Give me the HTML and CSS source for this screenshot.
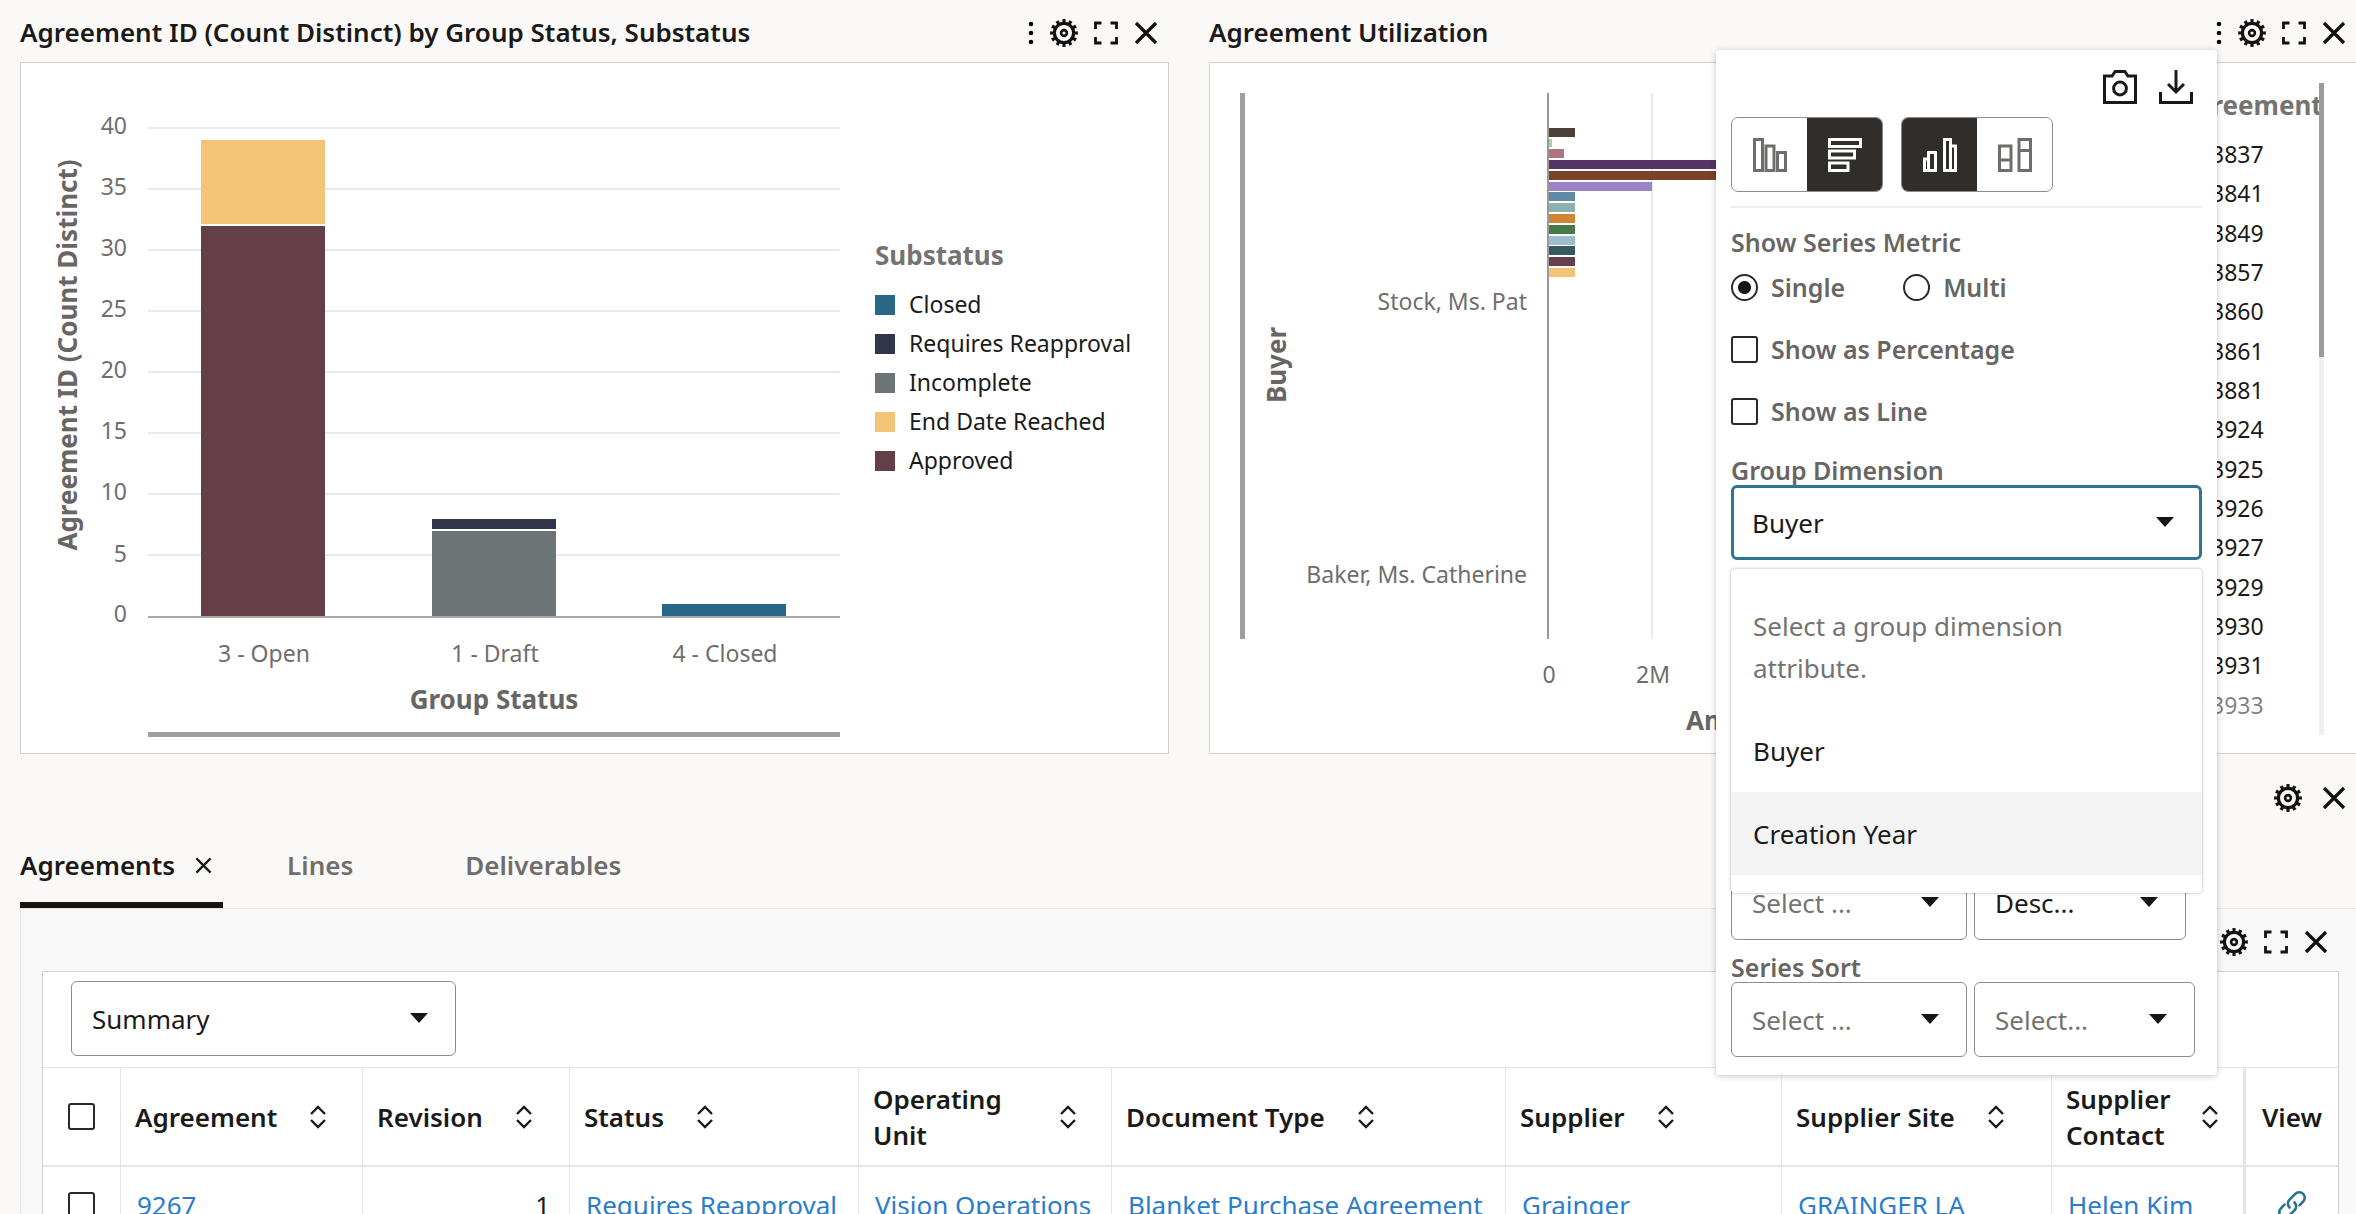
FILE: index.html
```html
<!DOCTYPE html>
<html lang="en">
<head>
<meta charset="utf-8">
<title>Agreements</title>
<link rel="stylesheet" href="styles.css">
</head>
<body>
<svg class="defs" aria-hidden="true">
  <symbol id="dots" viewBox="0 0 6 24"><circle cx="3" cy="3" r="2.300"/><circle cx="3" cy="12" r="2.300"/><circle cx="3" cy="21" r="2.300"/></symbol>
  <symbol id="gear" viewBox="0 0 28 28"><g fill="none" stroke="currentColor"><circle cx="14" cy="14" r="9.600" stroke-width="3.200"/><circle cx="14" cy="14" r="12.200" stroke-width="3.400" pathLength="24" stroke-dasharray="1 1" stroke-dashoffset="0.500"/><circle cx="14" cy="14" r="2.900" stroke-width="2.600"/></g></symbol>
  <symbol id="expand" viewBox="0 0 24 24"><path d="M1.500 8V2h6M16.500 2h6v6M22.500 16v6h-6M7.500 22h-6v-6" fill="none" stroke="currentColor" stroke-width="2.800"/></symbol>
  <symbol id="close" viewBox="0 0 24 24"><path d="M2 2l20 20M22 2L2 22" fill="none" stroke="currentColor" stroke-width="3.200"/></symbol>
  <symbol id="sort" viewBox="0 0 18 24"><path d="M2 9l7-7 7 7M2 15l7 7 7-7" fill="none" stroke="currentColor" stroke-width="2.400"/></symbol>
</svg>

<main class="page">
  <div class="widgets">
    <section class="widget">
      <header class="bar">
        <h2>Agreement ID (Count Distinct) by Group Status, Substatus</h2>
        <div class="tools">
          <button class="tool dots" aria-label="More"><svg><use href="#dots"/></svg></button>
          <button class="tool gear" aria-label="Settings"><svg><use href="#gear"/></svg></button>
          <button class="tool" aria-label="Expand"><svg><use href="#expand"/></svg></button>
          <button class="tool" aria-label="Close"><svg><use href="#close"/></svg></button>
        </div>
      </header>
      <div class="card status-card">
        <svg class="plot" viewBox="21 63 840 690" role="img" aria-label="Agreements by group status">
          <g class="grid">
            <path d="M148 128H840M148 189H840M148 250H840M148 311H840M148 372H840M148 433H840M148 494H840M148 555H840"/>
          </g>
          <g class="tick end">
            <text x="127" y="134">40</text><text x="127" y="195">35</text><text x="127" y="256">30</text>
            <text x="127" y="317">25</text><text x="127" y="378">20</text><text x="127" y="439">15</text>
            <text x="127" y="500">10</text><text x="127" y="562">5</text><text x="127" y="622">0</text>
          </g>
          <rect x="201" y="140" width="124" height="84" fill="#f3c377"/>
          <rect x="201" y="226" width="124" height="390" fill="#643f47"/>
          <rect x="432" y="519" width="124" height="10" fill="#32354b"/>
          <rect x="432" y="531" width="124" height="85" fill="#6c7475"/>
          <rect x="662" y="604" width="124" height="12" fill="#2a6687"/>
          <rect x="148" y="616" width="692" height="2" fill="#a8a8a8"/>
          <g class="tick mid">
            <text x="264" y="662">3 - Open</text><text x="495" y="662">1 - Draft</text><text x="725" y="662">4 - Closed</text>
          </g>
          <text class="axis-title" x="494" y="709">Group Status</text>
          <text class="axis-title" transform="translate(77 355) rotate(-90)">Agreement ID (Count Distinct)</text>
          <rect x="148" y="732" width="692" height="5" fill="#9f9f9f"/>
        </svg>
        <div class="legend">
          <h3>Substatus</h3>
          <ul>
            <li><i class="c-closed"></i>Closed</li>
            <li><i class="c-reapproval"></i>Requires Reapproval</li>
            <li><i class="c-incomplete"></i>Incomplete</li>
            <li><i class="c-reached"></i>End Date Reached</li>
            <li><i class="c-approved"></i>Approved</li>
          </ul>
        </div>
      </div>
    </section>

    <section class="widget">
      <header class="bar edge">
        <h2>Agreement Utilization</h2>
        <div class="tools">
          <button class="tool dots" aria-label="More"><svg><use href="#dots"/></svg></button>
          <button class="tool gear" aria-label="Settings"><svg><use href="#gear"/></svg></button>
          <button class="tool" aria-label="Expand"><svg><use href="#expand"/></svg></button>
          <button class="tool" aria-label="Close"><svg><use href="#close"/></svg></button>
        </div>
      </header>
      <div class="card util-card">
        <svg class="plot" viewBox="1210 63 960 690" role="img" aria-label="Agreement utilization by buyer">
          <rect x="1240" y="93" width="5" height="546" fill="#9f9f9f"/>
          <rect x="1651" y="93" width="2" height="546" fill="#e6eaee"/>
          <g>
            <rect x="1549" y="128" width="26" height="9" fill="#4a4038"/>
            <rect x="1549" y="139" width="3" height="8" fill="#b0cf90"/>
            <rect x="1549" y="149" width="15" height="9" fill="#b0747f"/>
            <rect x="1549" y="160" width="420" height="9" fill="#543366"/>
            <rect x="1549" y="171" width="420" height="9" fill="#7a4226"/>
            <rect x="1549" y="182" width="103" height="9" fill="#9a82c8"/>
            <rect x="1549" y="192" width="26" height="9" fill="#5f8aa5"/>
            <rect x="1549" y="203" width="26" height="9" fill="#8fb0b0"/>
            <rect x="1549" y="214" width="26" height="9" fill="#d18534"/>
            <rect x="1549" y="225" width="26" height="9" fill="#457a48"/>
            <rect x="1549" y="236" width="26" height="9" fill="#9cbccc"/>
            <rect x="1549" y="246" width="26" height="9" fill="#355a60"/>
            <rect x="1549" y="257" width="26" height="9" fill="#65404a"/>
            <rect x="1549" y="268" width="26" height="9" fill="#f3c377"/>
          </g>
          <rect x="1547" y="93" width="2" height="546" fill="#999"/>
          <g class="tick end"><text x="1527" y="310">Stock, Ms. Pat</text><text x="1527" y="583">Baker, Ms. Catherine</text></g>
          <g class="tick mid"><text x="1549" y="683">0</text><text x="1653" y="683">2M</text></g>
          <text class="axis-title" transform="translate(1286 365) rotate(-90)">Buyer</text>
          <text class="axis-title start" x="1686" y="730">Amount</text>
        </svg>
        <div class="id-legend">
          <div class="id-list">
            <h3>Agreement</h3>
            <ul>
              <li>3837</li><li>3841</li><li>3849</li><li>3857</li><li>3860</li>
              <li>3861</li><li>3881</li><li>3924</li><li>3925</li><li>3926</li>
              <li>3927</li><li>3929</li><li>3930</li><li>3931</li><li class="faded">3933</li>
            </ul>
          </div>
          <div class="track"><div class="thumb"></div></div>
        </div>
      </div>
    </section>
  </div>

  <section>
    <div class="section-bar">
      <div class="tools">
        <button class="tool gear" aria-label="Settings"><svg><use href="#gear"/></svg></button>
        <button class="tool" aria-label="Close"><svg><use href="#close"/></svg></button>
      </div>
    </div>
    <nav class="tabs" role="tablist">
      <button class="tab active" role="tab" aria-selected="true">Agreements<svg><use href="#close"/></svg></button>
      <button class="tab" role="tab">Lines</button>
      <button class="tab" role="tab">Deliverables</button>
    </nav>
    <div class="tab-panel">
      <div class="bar">
        <div class="tools">
          <button class="tool gear" aria-label="Settings"><svg><use href="#gear"/></svg></button>
          <button class="tool" aria-label="Expand"><svg><use href="#expand"/></svg></button>
          <button class="tool" aria-label="Close"><svg><use href="#close"/></svg></button>
        </div>
      </div>
      <div class="sheet">
        <div class="pick summary"><select aria-label="View"><option>Summary</option></select></div>
        <table>
          <colgroup><col class="w-check"><col class="w-agreement"><col class="w-revision"><col class="w-status"><col class="w-unit"><col class="w-doc"><col class="w-supplier"><col class="w-site"><col class="w-contact"><col class="w-view"></colgroup>
          <thead>
            <tr>
              <th class="check"><input type="checkbox" aria-label="Select all"></th>
              <th><div class="head">Agreement<svg><use href="#sort"/></svg></div></th>
              <th><div class="head">Revision<svg><use href="#sort"/></svg></div></th>
              <th><div class="head">Status<svg><use href="#sort"/></svg></div></th>
              <th><div class="head wrap"><span>Operating Unit</span><svg><use href="#sort"/></svg></div></th>
              <th><div class="head">Document Type<svg><use href="#sort"/></svg></div></th>
              <th><div class="head">Supplier<svg><use href="#sort"/></svg></div></th>
              <th><div class="head">Supplier Site<svg><use href="#sort"/></svg></div></th>
              <th class="freeze"><div class="head wrap"><span>Supplier Contact</span><svg><use href="#sort"/></svg></div></th>
              <th class="view">View</th>
            </tr>
          </thead>
          <tbody>
            <tr>
              <td class="check"><input type="checkbox" aria-label="Select 9267"></td>
              <td><a href="#">9267</a></td>
              <td class="num">1</td>
              <td><a href="#">Requires Reapproval</a></td>
              <td><a href="#">Vision Operations</a></td>
              <td><a href="#">Blanket Purchase Agreement</a></td>
              <td><a href="#">Grainger</a></td>
              <td><a href="#">GRAINGER LA</a></td>
              <td class="freeze"><a href="#">Helen Kim</a></td>
              <td class="view"><a href="#" aria-label="View 9267"><svg class="link" viewBox="0 0 30 30"><g fill="none" stroke="#27728f" stroke-width="2.600" stroke-linecap="round"><path d="M12.500 17.500a5.500 5.500 0 0 1 0-7.800l5.800-5.800a5.500 5.500 0 0 1 7.800 7.800l-3.600 3.600"/><path d="M17.500 12.500a5.500 5.500 0 0 1 0 7.800l-5.800 5.800a5.500 5.500 0 0 1-7.800-7.800l3.600-3.600"/></g></svg></a></td>
            </tr>
          </tbody>
        </table>
      </div>
    </div>
  </section>

  <aside class="popup">
    <div class="export">
      <button class="tool" aria-label="Snapshot"><svg viewBox="0 0 34 34"><path d="M1.500 6H9l3.200-4.500h9.600L25 6h7.500v26.500h-31z" fill="none" stroke="currentColor" stroke-width="3"/><circle cx="17" cy="18.500" r="6.400" fill="none" stroke="currentColor" stroke-width="3"/></svg></button>
      <button class="tool" aria-label="Download"><svg viewBox="0 0 34 34"><path d="M1.500 22v10.500h31V22M17 0v22M9 14l8 8 8-8" fill="none" stroke="currentColor" stroke-width="3"/></svg></button>
    </div>
    <div class="toggles">
      <div class="toggle">
        <button aria-label="Vertical"><svg viewBox="0 0 34 34"><path d="M1.500 1.500h8v31h-8zM13 8h8v24.500h-8zM24.500 14.500h8v18h-8z" fill="none" stroke="currentColor" stroke-width="3"/></svg></button>
        <button class="on" aria-label="Horizontal"><svg viewBox="0 0 34 34"><path d="M1.500 1.500h31v7h-31zM1.500 13h25v7h-25zM1.500 25h18.500v7.500H1.500z" fill="none" stroke="currentColor" stroke-width="3"/></svg></button>
      </div>
      <div class="toggle">
        <button class="on" aria-label="Grouped"><svg viewBox="0 0 34 34"><path d="M1.500 21h4v11.500h-4zM5.500 14.500h7v18h-7zM21.500 1.500h6v31h-6zM27.500 8h5v24.500h-5z" fill="none" stroke="currentColor" stroke-width="3"/></svg></button>
        <button aria-label="Stacked"><svg viewBox="0 0 34 34"><path d="M1.500 8H13v24.500H1.500zM1.500 22H13M21 1.500h11.500v31H21zM21 12.500h11.500" fill="none" stroke="currentColor" stroke-width="3"/></svg></button>
      </div>
    </div>
    <form class="options">
      <fieldset>
        <legend>Show Series Metric</legend>
        <div class="radios">
          <label><input type="radio" name="metric" checked>Single</label>
          <label><input type="radio" name="metric">Multi</label>
        </div>
      </fieldset>
      <label><input type="checkbox">Show as Percentage</label>
      <label><input type="checkbox">Show as Line</label>
      <div class="field">
        <label class="caption" for="group-dim">Group Dimension</label>
        <div class="pick open"><select id="group-dim"><option>Buyer</option></select></div>
        <div class="menu" role="listbox">
          <p>Select a group dimension attribute.</p>
          <button type="button" role="option">Buyer</button>
          <button type="button" role="option" class="hover">Creation Year</button>
        </div>
      </div>
      <div class="sorts group">
        <div class="pick empty"><select aria-label="Group sort by"><option>Select ...</option></select></div>
        <div class="pick"><select aria-label="Group sort order"><option>Desc...</option></select></div>
      </div>
      <label class="caption" for="series-sort">Series Sort</label>
      <div class="sorts">
        <div class="pick empty"><select id="series-sort"><option>Select ...</option></select></div>
        <div class="pick empty"><select aria-label="Series sort order"><option>Select...</option></select></div>
      </div>
    </form>
  </aside>
</main>
</body>
</html>
```

FILE: styles.css
```css
* { box-sizing: border-box; }

body {
  margin: 0;
  height: 100vh;
  overflow: hidden;
  background: #fbf9f8;
  color: #1b1a19;
  font: 26px/36px "Noto Sans", sans-serif;
}

h2, h3, p, ul { margin: 0; padding: 0; }
ul { list-style: none; }
button { padding: 0; border: 0; background: none; color: inherit; font: inherit; cursor: pointer; }
a { color: #2b7dc9; text-decoration: none; }
svg { display: block; }
.defs { display: none; }

.page { position: relative; }

.widgets {
  display: grid;
  grid-template-columns: 1149fr 1147fr;
  gap: 40px;
  padding-left: 20px;
}

/* title bars and icon tools */
.bar {
  display: flex;
  align-items: center;
  justify-content: flex-end;
  height: 62px;
  padding: 4px 11px 0 0;
}
.bar h2 { flex: 1; padding-bottom: 2px; font-size: 26px; font-weight: 600; white-space: nowrap; }
.bar.edge { padding-right: 10px; }
.tools { display: flex; align-items: center; gap: 16px; color: #111; }
.tool { width: 24px; height: 24px; }
.tool svg { width: 100%; height: 100%; }
.tool.dots { width: 6px; }
.tool.gear { width: 28px; height: 28px; }

.card { display: grid; background: #fff; border: 1px solid #d2d1d0; }
.status-card { grid-template-columns: 840fr 307fr; }
.util-card { grid-template-columns: 960fr 186fr; border-right: 0; }

.plot { width: 100%; overflow: hidden; }
.grid path { fill: none; stroke: #e6eaee; stroke-width: 2; }
.tick text { font-size: 23px; fill: #6f6e6c; }
.end text { text-anchor: end; }
.mid text { text-anchor: middle; }
.axis-title { font-size: 26px; font-weight: 700; fill: #686664; text-anchor: middle; }
.axis-title.start { text-anchor: start; }

.legend { padding: 174px 0 0 14px; }
.legend h3 { margin-bottom: 12px; font-size: 26px; color: #757371; }
.legend li { display: flex; align-items: center; gap: 14px; font-size: 23px; line-height: 39px; white-space: nowrap; }
.legend i { width: 20px; height: 20px; }
.c-closed { background: #2a6687; }
.c-reapproval { background: #32354b; }
.c-incomplete { background: #6c7475; }
.c-reached { background: #f3c377; }
.c-approved { background: #643f47; }

.id-legend { display: flex; padding: 20px 32px 18px 0; }
.id-list { flex: 1; width: 0; overflow: hidden; padding: 4px 0 0 7px; }
.id-list h3 { margin-bottom: 12px; font-size: 26px; color: #757371; }
.id-list ul { display: grid; grid-auto-rows: 1fr; height: 590px; padding-left: 34px; font-size: 23px; line-height: 39px; }
.faded { opacity: 0.55; }
.track { width: 5px; background: #efefef; }
.thumb { height: 42%; background: #9c9c9c; }

/* lower section */
.section-bar { display: flex; align-items: center; justify-content: flex-end; height: 87px; padding-right: 10px; }
.section-bar .tools { gap: 20px; }
.tabs { display: flex; gap: 64px; padding-left: 20px; }
.tab {
  display: flex;
  align-items: center;
  gap: 20px;
  padding: 6px 0 19px;
  border-bottom: 6px solid transparent;
  font-weight: 600;
  color: #6f6e6c;
}
.tab + .tab + .tab { margin-left: 48px; }
.tab svg { width: 17px; height: 17px; }
.tab.active { padding-right: 11px; border-color: #161513; color: #1b1a19; }

.tab-panel { margin-left: 20px; padding: 0 17px 0 21px; border: 1px solid #e4e4e4; border-width: 1px 0 0 1px; background: #f8f8f8; }
.sheet { border: 1px solid #d2d1d0; background: #fff; }

/* drop-downs */
.pick { position: relative; }
.pick select {
  appearance: none;
  display: block;
  width: 100%;
  height: 75px;
  padding: 0 20px;
  border: 1px solid #8f8d8b;
  border-radius: 6px;
  background: #fff;
  color: #1b1a19;
  font: inherit;
}
.pick::after {
  content: "";
  position: absolute;
  top: 32px;
  right: 28px;
  border: 9px solid transparent;
  border-top: 10px solid #161513;
  border-bottom: 0;
  pointer-events: none;
}
.pick.empty select { color: #757371; }
.pick.open select { padding: 0 18px; border: 3px solid #2d7593; outline: 0; }
.summary { width: 385px; margin: 9px 28px 11px; }

/* data table */
table { width: 100%; table-layout: fixed; border-collapse: separate; border-spacing: 0; }
th, td { padding: 0 14px; border: 0 solid #e6e5e4; border-width: 0 1px 0 0; text-align: left; white-space: nowrap; }
th { height: 100px; border-top-width: 1px; border-bottom-width: 2px; font-weight: 600; }
td { height: 76px; padding-left: 16px; }
th:last-child, td:last-child { border-right: 0; }
.freeze { border-right-width: 3px; }
.check { padding: 0 0 0 25px; }
.view { padding: 0; text-align: center; }
.num { padding-right: 19px; text-align: right; }
.head { display: flex; align-items: center; gap: 32px; }
.head svg { flex: none; width: 18px; height: 24px; }
.head.wrap { justify-content: space-between; padding-right: 20px; white-space: normal; }
.freeze .head.wrap { gap: 20px; padding-right: 10px; }
.link { width: 30px; height: 30px; margin: 0 auto; }
.w-check { width: 78px; }
.w-agreement { width: 242px; }
.w-revision { width: 207px; }
.w-status { width: 289px; }
.w-unit { width: 253px; }
.w-doc { width: 394px; }
.w-supplier { width: 276px; }
.w-site { width: 270px; }
.w-contact { width: 194px; }
.w-view { width: 92px; }

input { appearance: none; flex: none; display: block; width: 27px; height: 27px; margin: 0; border: 2px solid #2b2a29; border-radius: 3px; background: #fff; }
input[type="radio"] { border-radius: 50%; }
input[type="radio"]:checked { background: radial-gradient(circle, #161513 6px, #fff 7px); }

/* chart settings popup */
.popup {
  position: absolute;
  top: 50px;
  right: 139px;
  width: 501px;
  padding: 20px 15px 18px;
  border-radius: 4px;
  background: #fff;
  box-shadow: 0 1px 6px rgba(0, 0, 0, 0.24);
}
.export { display: flex; justify-content: flex-end; gap: 22px; padding-right: 9px; margin-bottom: 13px; }
.export .tool { width: 34px; height: 34px; }
.toggles { display: flex; gap: 18px; padding-bottom: 14px; border-bottom: 2px solid #efeeed; }
.toggle { display: flex; border: 1px solid #8f8d8b; border-radius: 7px; overflow: hidden; }
.toggle button { display: grid; place-items: center; width: 75px; height: 73px; color: #6f6e6c; }
.toggle .on { background: #312d2a; color: #fff; }
.toggle svg { width: 34px; height: 34px; }

.options { color: #686664; font-weight: 600; }
.options label, legend { font-size: 25px; }
.options label { display: flex; align-items: center; gap: 13px; height: 36px; margin-bottom: 26px; }
fieldset { margin: 0 0 26px; padding: 0; border: 0; }
legend { padding: 16px 0 9px; }
.radios { display: flex; gap: 58px; }
.radios label { margin: 0; }
.options label.caption { height: 30px; margin: 0; }
.options select { font-weight: 400; }
.field { position: relative; margin-bottom: 305px; }
.menu {
  position: absolute;
  z-index: 1;
  top: 114px;
  left: 0;
  right: 0;
  padding: 36px 0 18px;
  border-radius: 4px;
  background: #fff;
  box-shadow: 0 0 3px rgba(0, 0, 0, 0.35);
  color: #1b1a19;
  font-weight: 400;
}
.menu p { padding: 0 100px 20px 22px; color: #757371; line-height: 42px; }
.menu button { display: block; width: 100%; height: 83px; padding-left: 22px; text-align: left; }
.menu .hover { background: #f3f3f3; }
.sorts { display: grid; grid-template-columns: 236px 221px; gap: 7px; }
.sorts.group { grid-template-columns: 236px 212px; margin-bottom: 12px; }
```
